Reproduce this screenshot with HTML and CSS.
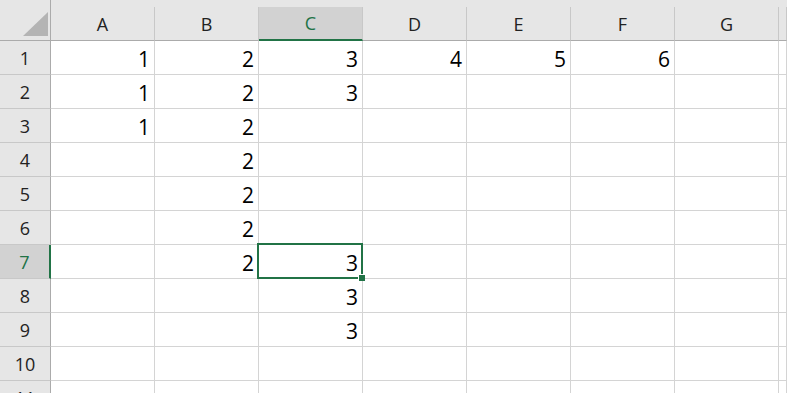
FILE: index.html
```html
<!DOCTYPE html>
<html lang="en">
<head>
    <meta charset="UTF-8">
    <title>Sheet1</title>
    <link rel="stylesheet" href="styles.css">
</head>
<body>
    <div class="sheet">
        <div class="corner"><span class="tri"></span></div>
        <div class="band"></div>
        <div class="ch">A</div><div class="ch">B</div><div class="ch sel">C</div><div class="ch">D</div><div class="ch">E</div><div class="ch">F</div><div class="ch">G</div><div class="ch"></div>

        <div class="rh">1</div><div class="c">1</div><div class="c">2</div><div class="c">3</div><div class="c">4</div><div class="c">5</div><div class="c">6</div><div class="c"></div><div class="c"></div>
        <div class="rh">2</div><div class="c">1</div><div class="c">2</div><div class="c">3</div><div class="c"></div><div class="c"></div><div class="c"></div><div class="c"></div><div class="c"></div>
        <div class="rh">3</div><div class="c">1</div><div class="c">2</div><div class="c"></div><div class="c"></div><div class="c"></div><div class="c"></div><div class="c"></div><div class="c"></div>
        <div class="rh">4</div><div class="c"></div><div class="c">2</div><div class="c"></div><div class="c"></div><div class="c"></div><div class="c"></div><div class="c"></div><div class="c"></div>
        <div class="rh">5</div><div class="c"></div><div class="c">2</div><div class="c"></div><div class="c"></div><div class="c"></div><div class="c"></div><div class="c"></div><div class="c"></div>
        <div class="rh">6</div><div class="c"></div><div class="c">2</div><div class="c"></div><div class="c"></div><div class="c"></div><div class="c"></div><div class="c"></div><div class="c"></div>
        <div class="rh sel">7</div><div class="c"></div><div class="c">2</div><div class="c active">3<span class="handle"></span></div><div class="c"></div><div class="c"></div><div class="c"></div><div class="c"></div><div class="c"></div>
        <div class="rh">8</div><div class="c"></div><div class="c"></div><div class="c">3</div><div class="c"></div><div class="c"></div><div class="c"></div><div class="c"></div><div class="c"></div>
        <div class="rh">9</div><div class="c"></div><div class="c"></div><div class="c">3</div><div class="c"></div><div class="c"></div><div class="c"></div><div class="c"></div><div class="c"></div>
        <div class="rh">10</div><div class="c"></div><div class="c"></div><div class="c"></div><div class="c"></div><div class="c"></div><div class="c"></div><div class="c"></div><div class="c"></div>
        <div class="rh">11</div><div class="c"></div><div class="c"></div><div class="c"></div><div class="c"></div><div class="c"></div><div class="c"></div><div class="c"></div><div class="c"></div>
    </div>
</body>
</html>
```

FILE: styles.css
```css
html, body {
    margin: 0;
    height: 100%;
    overflow: hidden;
    background: #fff;
}
body {
    font-family: 'Open Sans', 'Noto Sans', sans-serif;
    color: #000;
}
.sheet {
    display: grid;
    grid-template-columns: 51px repeat(7, 104px) 1fr;
    grid-template-rows: 7px 34px repeat(11, 34px);
}
.sheet > div { box-sizing: border-box; }

/* top left corner with the select-all triangle */
.corner {
    grid-row: 1 / 3;
    grid-column: 1;
    background: #e6e6e6;
    border-right: 1px solid #ababab;
    border-bottom: 1px solid #ababab;
    position: relative;
}
.tri {
    position: absolute;
    right: 2px;
    bottom: 4px;
    width: 25px;
    height: 24px;
    background: #b4b4b4;
    clip-path: polygon(100% 0, 100% 100%, 0 100%);
}
.band {
    grid-row: 1;
    grid-column: 2 / -1;
    background: #e6e6e6;
}

/* column headers */
.ch {
    background: #e6e6e6;
    border-right: 1px solid #c8c8c8;
    border-bottom: 1px solid #ababab;
    display: flex;
    align-items: center;
    justify-content: center;
    font-size: 18px;
    color: #222;
}
.ch.sel {
    background: #d2d2d2;
    border-bottom: 2px solid #217346;
    color: #217346;
}

/* row headers */
.rh {
    background: #e6e6e6;
    border-right: 1px solid #ababab;
    border-bottom: 1px solid #c8c8c8;
    display: flex;
    align-items: center;
    justify-content: center;
    font-size: 18px;
    color: #222;
}
.rh.sel {
    background: #d2d2d2;
    border-right: 2px solid #217346;
    color: #217346;
}

/* cells */
.c {
    border-right: 1px solid #d4d4d4;
    border-bottom: 1px solid #d4d4d4;
    display: flex;
    align-items: center;
    justify-content: flex-end;
    padding: 2px 4px 0 0;
    font-size: 21px;
}
.c.active { position: relative; }
.c.active::after {
    content: '';
    position: absolute;
    left: -2px;
    top: -2px;
    right: -1px;
    bottom: -1px;
    border: 2px solid #217346;
}
.handle {
    position: absolute;
    right: -3px;
    bottom: -3px;
    width: 6px;
    height: 6px;
    background: #217346;
    border-left: 1px solid #fff;
    border-top: 1px solid #fff;
    z-index: 2;
}
```
